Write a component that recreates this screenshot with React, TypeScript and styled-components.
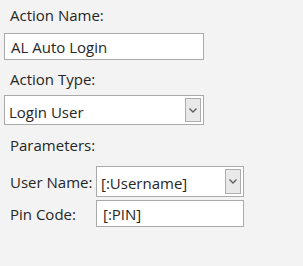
import { FunctionComponent } from "react";
import styled, { createGlobalStyle } from "styled-components";

const GlobalStyle = createGlobalStyle`
  body {
    margin: 0;
    background: #f3f3f3;
    font-family: "Open Sans", "Noto Sans", sans-serif;
    font-size: 15px;
    color: #262626;
  }
`
const Panel = styled.div`
  display: flex;
  flex-direction: column;
  width: 303px;
  height: 266px;
  padding: 5px 0 0 4px;
  box-sizing: border-box;
`
const Label = styled.div<{ $top?: number, $bottom?: number }>`
  height: 20px;
  line-height: 20px;
  padding-left: 6px;
  margin-top: ${props => props.$top || 0}px;
  margin-bottom: ${props => props.$bottom || 0}px;
  white-space: nowrap;
`
const TextBox = styled.div<{ $width: number, $height: number }>`
  display: flex;
  align-items: center;
  width: ${props => props.$width}px;
  height: ${props => props.$height}px;
  box-sizing: border-box;
  border: 1px solid #a9a9a9;
  background: #fff;
  padding: 1px 0 0 6px;
  white-space: nowrap;
`
const ComboBox = styled(TextBox)`
  justify-content: space-between;
  padding: 2px 2px 2px 4px;
`
const ComboText = styled.span`
  padding-top: 3px;
`
const DropButton = styled.span`
  display: flex;
  align-items: center;
  justify-content: center;
  width: 16px;
  align-self: stretch;
  box-sizing: border-box;
  border: 1px solid #adadad;
  background: #e9e9e9;
`
const ParamGrid = styled.div`
  display: grid;
  grid-template-columns: 92px 148px;
  row-gap: 3px;
  align-items: center;
  margin-top: 11px;
`
const ParamLabel = styled.div`
  padding-left: 6px;
  line-height: 20px;
  white-space: nowrap;
`

const Chevron = () => (
  <svg width="8" height="5" viewBox="0 0 8 5">
    <path d="M0.5 0.5 L4 4 L7.5 0.5" fill="none" stroke="#606060" strokeWidth="1.4" />
  </svg>
)

const Combo: FunctionComponent<{ value: string, width: number, height: number }> = (props) => (
  <ComboBox $width={props.width} $height={props.height}>
    <ComboText>{props.value}</ComboText>
    <DropButton><Chevron/></DropButton>
  </ComboBox>
)

const App = () => {
  return (
    <>
      <GlobalStyle/>
      <Panel>
        <Label $bottom={8}>Action Name:</Label>
        <TextBox $width={200} $height={27}>AL Auto Login</TextBox>
        <Label $top={9} $bottom={6}>Action Type:</Label>
        <Combo value="Login User" width={200} height={30}/>
        <Label $top={10}>Parameters:</Label>
        <ParamGrid>
          <ParamLabel>User Name:</ParamLabel>
          <Combo value="[:Username]" width={148} height={31}/>
          <ParamLabel>Pin Code:</ParamLabel>
          <TextBox $width={148} $height={27}>[:PIN]</TextBox>
        </ParamGrid>
      </Panel>
    </>
  )
}

export default App;
